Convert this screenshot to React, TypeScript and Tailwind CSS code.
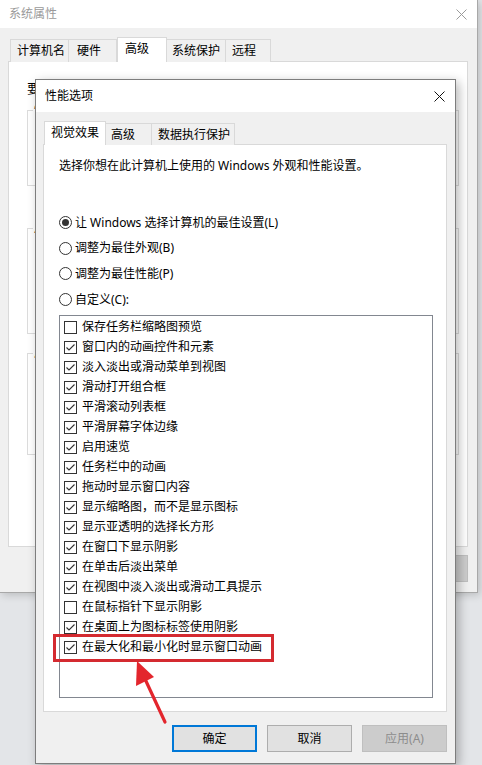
import React from "react";

const items: [string, boolean][] = [
  ["保存任务栏缩略图预览", false],
  ["窗口内的动画控件和元素", true],
  ["淡入淡出或滑动菜单到视图", true],
  ["滑动打开组合框", true],
  ["平滑滚动列表框", true],
  ["平滑屏幕字体边缘", true],
  ["启用速览", true],
  ["任务栏中的动画", true],
  ["拖动时显示窗口内容", true],
  ["显示缩略图，而不是显示图标", true],
  ["显示亚透明的选择长方形", true],
  ["在窗口下显示阴影", true],
  ["在单击后淡出菜单", true],
  ["在视图中淡入淡出或滑动工具提示", true],
  ["在鼠标指针下显示阴影", false],
  ["在桌面上为图标标签使用阴影", true],
  ["在最大化和最小化时显示窗口动画", true],
];

function CloseX({ color }: { color: string }) {
  return (
    <svg width="11" height="11" viewBox="0 0 11 11">
      <path d="M0.5 0.5L10.5 10.5M10.5 0.5L0.5 10.5" stroke={color} strokeWidth="1" />
    </svg>
  );
}

function Check({ on }: { on: boolean }) {
  return (
    <svg width="13" height="13" viewBox="0 0 13 13" className="shrink-0">
      <rect x="0.5" y="0.5" width="12" height="12" fill="#fff" stroke="#333" />
      {on && <path d="M2.5 6.5L5 9L10.5 3.5" fill="none" stroke="#333" strokeWidth="1.1" />}
    </svg>
  );
}

function Radio({ on }: { on: boolean }) {
  return (
    <svg width="13" height="13" viewBox="0 0 13 13" className="shrink-0">
      <circle cx="6.5" cy="6.5" r="6" fill="#fff" stroke="#333" />
      {on && <circle cx="6.5" cy="6.5" r="3.5" fill="#333" />}
    </svg>
  );
}

function Group({ label, h, mt }: { label: string; h: string; mt: string }) {
  return (
    <div className={`relative ${mt} ${h} border border-[#dcdcdc] mr-[8px]`}>
      <span className="absolute left-[5px] -top-[9px] bg-white px-[1px] text-[12px] leading-[16px] text-black whitespace-nowrap">{label}</span>
    </div>
  );
}

export default function App() {
  return (
    <div className="relative w-[482px] h-[765px] overflow-hidden bg-[#e3e5e8] font-['Noto_Sans','Noto_Sans_CJK_SC',sans-serif] text-[12px] text-black">
      {/* Background window: 系统属性 */}
      <div className="absolute left-0 top-0 w-[478px] h-[593px] bg-[#f0f0f0] border-r border-b border-[#a8a8a8] shadow-[2px_2px_8px_rgba(0,0,0,0.18)] flex flex-col">
        <div className="h-[28px] bg-white flex items-center justify-between pl-[9px] pr-[10px]">
          <span className="text-[#9a9a9a] leading-[16px]">系统属性</span>
          <CloseX color="#9a9a9a" />
        </div>
        <div className="flex flex-col px-[8px] pt-[9px] pr-[9px]">
          <div className="flex items-end h-[25px] pl-[2px] relative z-10 whitespace-nowrap">
            <div className="h-[23px] w-[59px] border border-[#d9d9d9] border-b-0 bg-[#f0f0f0] flex items-center pl-[6px] leading-[16px]">计算机名</div>
            <div className="h-[23px] w-[48px] border border-[#d9d9d9] border-b-0 border-l-0 bg-[#f0f0f0] flex items-center pl-[8px] leading-[16px]">硬件</div>
            <div className="h-[25px] w-[50px] border border-[#d9d9d9] border-b-0 bg-white flex items-start pt-[3px] pl-[7px] leading-[16px]">高级</div>
            <div className="h-[23px] w-[59px] border border-[#d9d9d9] border-b-0 border-l-0 bg-[#f0f0f0] flex items-center pl-[5px] leading-[16px]">系统保护</div>
            <div className="h-[23px] w-[45px] border border-[#d9d9d9] border-b-0 border-l-0 bg-[#f0f0f0] flex items-center pl-[6px] leading-[16px]">远程</div>
          </div>
          <div className="h-[486px] -mt-px bg-white border border-[#d9d9d9] flex flex-col pl-[18px] pt-[18px]">
            <div className="leading-[16px] text-[13px] whitespace-nowrap">要进行大多数更改，你必须作为管理员登录。</div>
            <Group label="性能" h="h-[76px]" mt="mt-[14px]" />
            <Group label="用户配置文件" h="h-[106px]" mt="mt-[42px]" />
            <Group label="启动和故障恢复" h="h-[102px]" mt="mt-[19px]" />
          </div>
          <div className="flex justify-end gap-[7px] mt-[8px]">
            <div className="w-[75px] h-[27px] bg-[#e1e1e1] border border-[#adadad]" />
            <div className="w-[75px] h-[27px] bg-[#e1e1e1] border border-[#adadad]" />
            <div className="w-[75px] h-[27px] bg-[#cccccc] border border-[#bfbfbf]" />
          </div>
        </div>
      </div>

      {/* Dialog: 性能选项 */}
      <div className="absolute left-[35px] top-[79px] w-[421px] h-[685px] border border-[#7d7d7d] bg-[#f0f0f0] shadow-[3px_3px_10px_rgba(0,0,0,0.28)] flex flex-col">
        <div className="h-[32px] bg-white flex items-center justify-between pl-[9px] pr-[10px] shrink-0">
          <span className="leading-[16px]">性能选项</span>
          <CloseX color="#111" />
        </div>
        <div className="flex flex-col pl-[7px] pr-[8px] pt-[9px]">
          <div className="flex items-end h-[24px] pl-[1px] relative z-10 whitespace-nowrap">
            <div className="h-[24px] w-[62px] border border-[#d9d9d9] border-b-0 bg-white flex items-start pt-[3px] pl-[6px] leading-[16px]">视觉效果</div>
            <div className="h-[22px] w-[46px] border border-[#d9d9d9] border-b-0 border-l-0 bg-[#f0f0f0] flex items-center pl-[5px] leading-[16px]">高级</div>
            <div className="h-[22px] w-[83px] border border-[#d9d9d9] border-b-0 border-l-0 bg-[#f0f0f0] flex items-center pl-[6px] leading-[16px]">数据执行保护</div>
          </div>
          <div className="h-[568px] -mt-px bg-white border border-[#d9d9d9] flex flex-col pl-[15px] pt-[13px]">
            <div className="leading-[16px] h-[16px]">选择你想在此计算机上使用的 Windows 外观和性能设置。</div>
            <div className="flex flex-col mt-[36px]">
              {[
                ["让 Windows 选择计算机的最佳设置(L)", true],
                ["调整为最佳外观(B)", false],
                ["调整为最佳性能(P)", false],
                ["自定义(C):", false],
              ].map(([label, on], i) => (
                <div key={i} className="h-[25.6px] flex items-center">
                  <Radio on={on as boolean} />
                  <span className="ml-[3px] leading-[16px]">{label as string}</span>
                </div>
              ))}
            </div>
            <div className="mt-[3px] w-[374px] h-[383px] border border-[#828790] bg-white pt-px flex flex-col">
              {items.map(([label, on], i) => (
                <div key={i} className="h-[20px] flex items-center pl-[4px]">
                  <Check on={on} />
                  <span className="ml-[5px] leading-[16px]">{label}</span>
                </div>
              ))}
            </div>
          </div>
          <div className="flex justify-end gap-[10px] mt-[13px]">
            <div className="w-[85px] h-[27px] bg-[#e1e1e1] border-2 border-[#0078d7] flex items-center justify-center leading-[16px]">确定</div>
            <div className="w-[85px] h-[27px] bg-[#e1e1e1] border border-[#adadad] flex items-center justify-center leading-[16px]">取消</div>
            <div className="w-[85px] h-[27px] bg-[#cccccc] border border-[#bfbfbf] flex items-center justify-center leading-[16px] text-[#8c8c8c]">应用(A)</div>
          </div>
        </div>
      </div>

      {/* Red highlight box */}
      <div className="absolute left-[53px] top-[634px] w-[221px] h-[28px] border-[3px] border-[#d42a30]" />

      {/* Red arrow */}
      <svg className="absolute left-0 top-0" width="482" height="765" viewBox="0 0 482 765">
        <line x1="165" y1="722" x2="145" y2="679" stroke="#e3262d" strokeWidth="3.2" strokeLinecap="round" />
        <polygon points="137,661 154,677 136,686" fill="#e3262d" />
      </svg>
    </div>
  );
}
